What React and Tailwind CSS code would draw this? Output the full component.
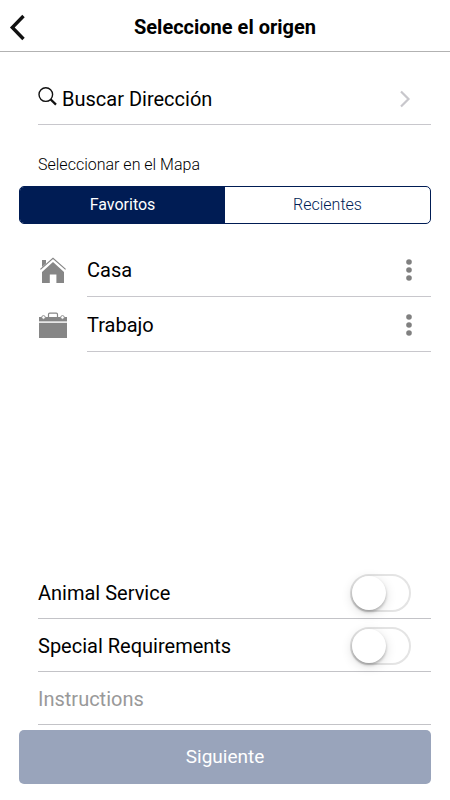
import React, { useState } from 'react';

const HomeIcon = () => (
  <svg className="w-7 h-7" viewBox="0 0 28 28" fill="#868686" aria-hidden="true">
    <path d="M3 4h4v3.4L3 11z" />
    <path d="M14 6L25 16v11H17.4v-8.4h-6.6V27H3V16z" />
    <path d="M1.4 13.4L14 2.4l12.6 11" fill="none" stroke="#868686" strokeWidth="1.2" />
    <path d="M2 15L14 4.4 26 15" fill="none" stroke="#fff" strokeWidth="1" />
  </svg>
);

const BriefcaseIcon = () => (
  <svg className="w-7 h-7" viewBox="0 0 28 28" fill="#868686" aria-hidden="true">
    <path d="M0 10.4V6h28v4.4z" />
    <path d="M0 11.8h28V27H0z" />
    <path d="M9.5 6.4V3.4q0-1.2 1.2-1.2h6.6q1.2 0 1.2 1.2v3" fill="none" stroke="#868686" strokeWidth="1.2" />
    <circle cx="4.5" cy="6.4" r="1.8" fill="#fff" stroke="#868686" strokeWidth="0.9" />
    <circle cx="23.5" cy="6.4" r="1.8" fill="#fff" stroke="#868686" strokeWidth="0.9" />
  </svg>
);

const DotsIcon = () => (
  <svg className="w-6 h-6" viewBox="0 0 24 24" fill="#808080" aria-hidden="true">
    <circle cx="12" cy="4" r="2.8" />
    <circle cx="12" cy="12" r="2.8" />
    <circle cx="12" cy="20" r="2.8" />
  </svg>
);

const FAVORITES = [
  { id: 'home', name: 'Casa', Icon: HomeIcon },
  { id: 'work', name: 'Trabajo', Icon: BriefcaseIcon },
];

function Toggle({ label, checked, onChange }) {
  return (
    <label className="h-[53px] flex items-center justify-between pt-[2px] pr-5 border-b border-[#c3c3c7]">
      <span>{label}</span>
      <input
        type="checkbox"
        role="switch"
        checked={checked}
        onChange={(e) => onChange(e.target.checked)}
        className="appearance-none flex items-center w-[61px] h-[38px] rounded-full border-2 border-[#e4e4e4] bg-white checked:bg-[#001c54] before:block before:size-[34px] before:rounded-full before:bg-white before:shadow-[0_2px_3px_rgba(0,0,0,0.25),0_3px_12px_rgba(0,0,0,0.14)] checked:before:translate-x-[23px]"
      />
    </label>
  );
}

export default function App() {
  const [tab, setTab] = useState('favorites');
  const [animal, setAnimal] = useState(false);
  const [special, setSpecial] = useState(false);
  const [instructions, setInstructions] = useState('');

  return (
    <div className="min-h-screen flex flex-col bg-white text-black text-[20px] leading-6 font-['Roboto',sans-serif]">
      <header className="h-[52px] grid grid-cols-[40px_1fr_40px] items-center pt-[2px] border-b border-[#b2b2b2]">
        <button aria-label="Volver" className="pl-2">
          <svg className="w-5 h-7" viewBox="0 0 20 28" fill="none" stroke="#111" strokeWidth="3.4" aria-hidden="true">
            <path d="M15.5 3L4.3 14.5 15.5 26" />
          </svg>
        </button>
        <h1 className="text-center font-bold">Seleccione el origen</h1>
      </header>

      <main className="flex-1 flex flex-col px-[19px] pt-5 pb-4">
        <button className="ml-[19px] h-[53px] flex items-center gap-1 pt-[2px] pr-[18px] border-b border-[#c8c7cc]">
          <svg className="w-5 h-5 mb-1" viewBox="0 0 20 20" fill="none" stroke="#111" aria-hidden="true">
            <circle cx="7.8" cy="7.6" r="6.8" strokeWidth="1.4" />
            <path d="M12.6 12.4l5.4 5.2" strokeWidth="2.2" />
          </svg>
          <span>Buscar Dirección</span>
          <svg className="w-4 h-5 ml-auto" viewBox="0 0 16 20" fill="none" stroke="#c8c7cc" strokeWidth="2.2" aria-hidden="true">
            <path d="M4 2.5l7.5 7.5L4 17.5" />
          </svg>
        </button>

        <h2 className="ml-[19px] mt-7 mb-[9px] text-base font-light">Seleccionar en el Mapa</h2>

        <div role="tablist" className="h-[38px] grid grid-cols-2 rounded-[5px] border border-[#001c54] overflow-hidden text-base">
          <button
            role="tab"
            aria-selected={tab === 'favorites'}
            onClick={() => setTab('favorites')}
            className={tab === 'favorites' ? 'bg-[#001c54] text-white' : 'font-light text-[#001c54]'}
          >
            Favoritos
          </button>
          <button
            role="tab"
            aria-selected={tab === 'recent'}
            onClick={() => setTab('recent')}
            className={tab === 'recent' ? 'bg-[#001c54] text-white' : 'font-light text-[#001c54]'}
          >
            Recientes
          </button>
        </div>

        {tab === 'favorites' && (
          <ul className="ml-5 mt-[18px]">
            {FAVORITES.map(({ id, name, Icon }) => (
              <li key={id} className="flex items-center gap-5">
                <Icon />
                <div className="flex-1 h-[55px] flex items-center justify-between pt-[2px] pr-[10px] border-b border-[#c8c7cc]">
                  <span>{name}</span>
                  <button aria-label={`Opciones de ${name}`}>
                    <DotsIcon />
                  </button>
                </div>
              </li>
            ))}
          </ul>
        )}

        <form className="mt-auto" onSubmit={(e) => e.preventDefault()}>
          <div className="ml-[19px]">
            <Toggle label="Animal Service" checked={animal} onChange={setAnimal} />
            <Toggle label="Special Requirements" checked={special} onChange={setSpecial} />
            <input
              type="text"
              aria-label="Instructions"
              placeholder="Instructions"
              value={instructions}
              onChange={(e) => setInstructions(e.target.value)}
              className="block w-full h-[53px] pt-[2px] border-b border-[#c3c3c7] placeholder:text-[#999] focus:outline-none"
            />
          </div>
          <button type="submit" className="mt-[5px] w-full h-[54px] rounded-[5px] bg-[#99a4bb] text-white text-[19px]">
            Siguiente
          </button>
        </form>
      </main>
    </div>
  );
}
